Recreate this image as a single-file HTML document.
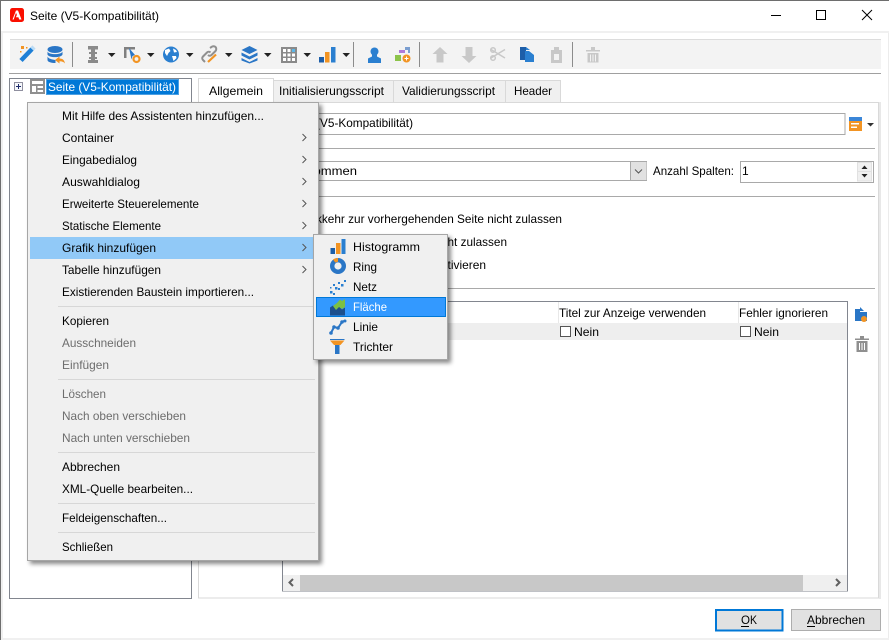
<!DOCTYPE html>
<html lang="de"><head><meta charset="utf-8"><title>Seite (V5-Kompatibilität)</title>
<style>html,body{margin:0;padding:0;background:#fff;overflow:hidden}svg{display:block}
text{font-family:"Liberation Sans",sans-serif;font-size:12px;fill:#000}
.d{fill:#6d6d6d}.w{fill:#fff}</style></head><body>
<svg width="889" height="640" viewBox="0 0 889 640" xmlns="http://www.w3.org/2000/svg">
<defs><filter id="s" x="-5%" y="-5%" width="115%" height="115%"><feDropShadow dx="3" dy="3" stdDeviation="2" flood-color="#000" flood-opacity=".45"/></filter></defs>
<rect width="889" height="640" fill="#fff"/>
<!-- window frame -->
<rect x="0" y="0" width="889" height="1" fill="#6e6e6e"/>
<rect x="0" y="0" width="1" height="640" fill="#6e6e6e"/>
<rect x="1" y="31" width="888" height="2" fill="#f0f0f0"/>
<rect x="1" y="33" width="2" height="605" fill="#f0f0f0"/>
<rect x="888" y="33" width="1" height="605" fill="#ececec"/>
<rect x="1" y="638" width="888" height="2" fill="#f0f0f0"/>
<!-- title bar -->
<rect x="10" y="8" width="14" height="14" rx="2.500" fill="#fa0f00"/>
<path d="M12.500 19.500 16 10.500h2l3.500 9h-2.300l-.8-2.200h-2.500l1-2.400-.9-2.200-2.300 6.800z" fill="#fff"/>
<text x="30" y="20" textLength="129" lengthAdjust="spacingAndGlyphs">Seite (V5-Kompatibilität)</text>
<rect x="771" y="15" width="10" height="1" fill="#000"/>
<rect x="816.500" y="10.500" width="9" height="9" fill="none" stroke="#000"/>
<path d="M862 10l10 10M872 10l-10 10" stroke="#000" fill="none"/>
<!-- toolbar -->
<rect x="10" y="39" width="871" height="30" fill="#f3f3f3"/>
<rect x="10" y="39" width="871" height="1" fill="#dcdcdc"/>
<rect x="9" y="73" width="872" height="1" fill="#a0a0a0"/>
<g fill="#8c8c8c"><rect x="72" y="42" width="1" height="25"/><rect x="353" y="42" width="1" height="25"/><rect x="419" y="42" width="1" height="25"/><rect x="572" y="42" width="1" height="25"/></g>
<!-- wand -->
<path d="M21 60.500 32 49" stroke="#1e7fd6" stroke-width="4.500" fill="none"/><path d="M32 49l2-2" stroke="#bcdcf5" stroke-width="4.500"/>
<g fill="#f29423"><rect x="21" y="46" width="3" height="3"/><rect x="26" y="47" width="1.500" height="1.500"/><rect x="20" y="51" width="1.500" height="1.500"/></g>
<!-- db -->
<ellipse cx="55" cy="49.500" rx="7.500" ry="3.500" fill="#2a76c6"/><path d="M47.500 51.500c1 3.500 14 3.500 15 0v3c-1 3.500-14 3.500-15 0zM47.500 56.500c1 3 8 3.500 8 3.500v3c-4 0-8-1-8-3z" fill="#2a76c6"/>
<path d="M55 60l4.500-3.500v2c3.500 0 5 2 5.500 5-1-1.500-3-2.300-5.500-2.300v2.300z" fill="#f29423"/>
<!-- I beam -->
<path d="M88 46h10v3.500h-3V52h2v2h-2v3h2v2h-2v1h3v3H88v-3h3v-1h-2v-2h2v-3h-2v-2h2v-2.500h-3z" fill="#8a8a8a"/>
<!-- arrows -->
<g fill="#222"><path d="M108 53h7.500l-3.750 4zM147 53h7.500l-3.750 4zM186 53h7.500l-3.750 4zM225 53h7.500l-3.750 4zM264 53h7.500l-3.750 4zM303.500 53h7.500l-3.750 4zM342.500 53h7.500l-3.750 4z"/></g>
<!-- field-settings -->
<path d="M124 47h11v2.500h-8.500V58H124z" fill="#808080"/><path d="M129 48l6 7-2.500 1-1 3.500z" fill="#2a76c6"/><circle cx="136.500" cy="59" r="3" fill="none" stroke="#f29423" stroke-width="2.200"/>
<!-- globe -->
<circle cx="171" cy="54.500" r="8" fill="#2a7fd0"/><path d="M165 50l4-1.500 1.500 2.500-2 2-1.500 3-2-3zM173 48.500l3 1.500 1 2-3 .5zM172 56l4 0 .5 2-3 3z" fill="#fff"/>
<!-- link -->
<path d="M205 62l-2-2c-1-1-1-2.500 0-3.500l4-4c1-1 2.500-1 3.500 0M210 48l1.500-1c1-1 3-1 4 0s1 3 0 4l-4 4c-1 1-2.500 1-3.500 0" stroke="#909090" stroke-width="2" fill="none"/><path d="M208 62l8-7.500" stroke="#f29423" stroke-width="2.200"/>
<!-- layers -->
<path d="M249.500 46l8 4-8 4-8-4z" fill="#2a76c6"/><path d="M241.500 52.500l8 4 8-4v3l-8 4-8-4z" fill="#2a76c6"/><path d="M241.500 58l8 4 8-4v2.500l-8 3-8-3z" fill="#2a76c6"/>
<!-- table -->
<rect x="281" y="47" width="16" height="16" fill="#8a8a8a"/><g fill="#fff"><rect x="283" y="49" width="3" height="3"/><rect x="287.500" y="49" width="3" height="3"/><rect x="283" y="53.500" width="3" height="3"/><rect x="287.500" y="53.500" width="3" height="3"/><rect x="292" y="53.500" width="3" height="3"/><rect x="283" y="58" width="3" height="3"/><rect x="287.500" y="58" width="3" height="3"/><rect x="292" y="58" width="3" height="3"/></g><rect x="292" y="49" width="3" height="3" fill="#5bb7e8"/>
<!-- chart -->
<rect x="319" y="57" width="5" height="5.500" fill="#1d5ea8"/><rect x="325" y="52" width="4.500" height="10.500" fill="#f29423"/><rect x="331" y="47" width="4.500" height="15.500" fill="#2a7fd0"/>
<!-- person -->
<circle cx="374.500" cy="51.500" r="4" fill="#2a7fd0"/><path d="M372 54.500h5v2l4 2v4.500h-13v-4.500l4-2z" fill="#2a7fd0"/>
<!-- add shape -->
<rect x="395" y="55" width="6" height="6" fill="#8cc34a"/><path d="M399 50h6v3h-6z" fill="#b07ad8"/><path d="M405 47h5v6h-2v-3h-3z" fill="#7b9ed0"/><circle cx="406.500" cy="58.500" r="4" fill="#f29423"/><path d="M404.500 58.500h4M406.500 56.500v4" stroke="#fff"/>
<!-- disabled -->
<path d="M440 47l7.500 7h-4v8.500h-7V54h-4z" fill="#c8c8c8"/>
<path d="M469 63l-7.500-7h4v-9h7v9h4z" fill="#c8c8c8"/>
<path d="M491 49.500l14 8.500M491 58l14-8.500" stroke="#c8c8c8" stroke-width="1.500"/><circle cx="493" cy="50" r="2.300" fill="none" stroke="#c8c8c8" stroke-width="1.500"/><circle cx="493" cy="58" r="2.300" fill="none" stroke="#c8c8c8" stroke-width="1.500"/>
<path d="M520 47h6v13h-6z" fill="#1d5ea8"/><path d="M525 51h4l5 4v7h-9z" fill="#2a7fd0"/><path d="M526 47l4 3h-4z" fill="#2a7fd0"/>
<path d="M551 50h3v-3h5v3h3v13h-11z" fill="#c8c8c8"/><rect x="554" y="54" width="5" height="6" fill="#f3f3f3"/>
<path d="M586 50h14v1.500h-14zM591 47h4v3h-4zM587.500 53h11v9.500h-11z" fill="#c8c8c8"/><path d="M590.500 54.500v7M593 54.500v7M595.500 54.500v7" stroke="#f3f3f3"/>
<!-- tree -->
<rect x="9.500" y="78.500" width="182" height="520" fill="#fff" stroke="#82868f"/>
<rect x="14.500" y="82.500" width="8" height="8" fill="#f6f8fb" stroke="#8f8f9f"/><path d="M16 86.500h5M18.500 84v5" stroke="#1e2a6a"/>
<rect x="30" y="79" width="15" height="15" fill="#8f8f8f"/><rect x="32" y="81" width="11" height="3" fill="#fff"/><rect x="32" y="86" width="4" height="6" fill="#fff"/><rect x="37.500" y="86" width="5.500" height="2" fill="#fff"/><rect x="37.500" y="90" width="5.500" height="2" fill="#fff"/>
<rect x="46" y="79" width="133" height="16" fill="#0078d7"/>
<rect x="46.500" y="79.500" width="132" height="15" fill="none" stroke="#fff" stroke-dasharray="1 1" opacity=".6"/>
<text class="w" x="48" y="91" textLength="128" lengthAdjust="spacingAndGlyphs">Seite (V5-Kompatibilität)</text>
<!-- tabs -->
<rect x="198.500" y="102.500" width="680" height="495.500" fill="#fff" stroke="#d9d9d9"/>
<rect x="879" y="102" width="2" height="497" fill="#e8e8e8"/>
<rect x="274" y="80.500" width="287" height="21.500" fill="#f0f0f0"/>
<path d="M274 80.500h286.500V102M393.500 81v21M505.500 81v21" stroke="#d9d9d9" fill="none"/>
<rect x="198.500" y="78.500" width="75" height="24" fill="#fff"/><path d="M198.500 103V78.500h75V103" stroke="#d9d9d9" fill="none"/>
<text x="209" y="95" textLength="54" lengthAdjust="spacingAndGlyphs">Allgemein</text>
<text x="279" y="95" textLength="105" lengthAdjust="spacingAndGlyphs">Initialisierungsscript</text>
<text x="402" y="95" textLength="93" lengthAdjust="spacingAndGlyphs">Validierungsscript</text>
<text x="514" y="95" textLength="38" lengthAdjust="spacingAndGlyphs">Header</text>
<!-- form -->
<rect x="282.500" y="113.500" width="562.500" height="21" fill="#fff" stroke="#a9a9a9"/>
<text x="286" y="127" textLength="127" lengthAdjust="spacingAndGlyphs">Seite (V5-Kompatibilität)</text>
<rect x="849" y="117" width="13" height="4" fill="#3b86d8"/><rect x="849" y="121" width="13" height="10" fill="#f29423"/><rect x="851" y="123" width="8" height="1.500" fill="#fff"/><rect x="851" y="126.500" width="6" height="1.500" fill="#fff"/>
<path d="M867 123h7l-3.500 3.500z" fill="#333"/>
<rect x="210" y="148" width="665" height="1" fill="#a9a9a9"/>
<rect x="282.500" y="161.500" width="364" height="19" fill="#fff" stroke="#a9a9a9"/>
<rect x="631" y="162" width="15.500" height="18" fill="#e1e1e1"/><rect x="630" y="162" width="1" height="18" fill="#a9a9a9"/>
<path d="M635 169.500l3.500 3.500 3.500-3.500" stroke="#555" fill="none"/>
<text x="286" y="175" textLength="71" lengthAdjust="spacingAndGlyphs">Willkommen</text>
<text x="653" y="175" textLength="81" lengthAdjust="spacingAndGlyphs">Anzahl Spalten:</text>
<rect x="740.500" y="161.500" width="133" height="21" fill="#fff" stroke="#a9a9a9"/>
<text x="742" y="175">1</text>
<rect x="857" y="162" width="15" height="19.500" fill="#e1e1e1"/><rect x="858" y="163" width="13" height="8" fill="#f0f0f0"/><rect x="858" y="172" width="13" height="8.500" fill="#f0f0f0"/>
<path d="M861.500 169h6l-3-3.500zM861.500 174h6l-3 3.500z" fill="#222"/>
<rect x="210" y="196" width="665" height="1" fill="#a9a9a9"/>
<text x="300" y="223" textLength="16" lengthAdjust="spacingAndGlyphs">Rüc</text>
<text x="316" y="223" textLength="246" lengthAdjust="spacingAndGlyphs">kkehr zur vorhergehenden Seite nicht zulassen</text>
<text x="300" y="246" textLength="147" lengthAdjust="spacingAndGlyphs">Automatische Weiterleitung nic</text>
<text x="447.500" y="246" textLength="59.500" lengthAdjust="spacingAndGlyphs">ht zulassen</text>
<text x="340" y="269" textLength="107" lengthAdjust="spacingAndGlyphs">Seitenansicht ak</text>
<text x="447.500" y="269" textLength="38.500" lengthAdjust="spacingAndGlyphs">tivieren</text>
<rect x="210" y="288" width="665" height="1" fill="#a9a9a9"/>
<!-- table -->
<rect x="282.500" y="301.500" width="565" height="289.500" fill="#fff" stroke="#82868f"/>
<rect x="283" y="323" width="564" height="17" fill="#eeeeee"/>
<rect x="558" y="302" width="1" height="21" fill="#e8e8e8"/><rect x="738" y="302" width="1" height="21" fill="#e8e8e8"/>
<text x="559" y="317" textLength="147" lengthAdjust="spacingAndGlyphs">Titel zur Anzeige verwenden</text>
<text x="739" y="317" textLength="89" lengthAdjust="spacingAndGlyphs">Fehler ignorieren</text>
<rect x="560.500" y="326.500" width="10" height="10" fill="#fff" stroke="#555"/><text x="574" y="336" textLength="25" lengthAdjust="spacingAndGlyphs">Nein</text>
<rect x="740.500" y="326.500" width="10" height="10" fill="#fff" stroke="#555"/><text x="754" y="336" textLength="25" lengthAdjust="spacingAndGlyphs">Nein</text>
<rect x="283" y="575" width="564" height="16" fill="#efefef"/><rect x="300" y="575" width="503" height="16" fill="#c8c8c8"/>
<path d="M293 579l-3.500 3.500 3.500 3.500M836 579l3.500 3.500-3.500 3.500" stroke="#606060" stroke-width="2" fill="none"/>
<!-- side icons -->
<path d="M855 309h5v3h7v9h-12z" fill="#2a76c6"/><path d="M860 307l4 4h-4z" fill="#2a76c6"/><circle cx="864" cy="319" r="3" fill="#f29423"/>
<path d="M855 338.500h14v1.500h-14zM860 336h4v2.500h-4zM856.500 341h11v11h-11z" fill="#8f8f8f"/><path d="M859.500 343v7M862 343v7M864.500 343v7" stroke="#fff"/>
<!-- buttons -->
<rect x="716" y="610" width="66.500" height="20.500" fill="#e1e1e1" stroke="#0078d7" stroke-width="2"/>
<text x="741" y="624" textLength="9" lengthAdjust="spacingAndGlyphs">O</text><text x="750" y="624" textLength="7" lengthAdjust="spacingAndGlyphs">K</text><rect x="741" y="626" width="8" height="1" fill="#000"/>
<rect x="791.500" y="609.500" width="89" height="21" fill="#e1e1e1" stroke="#adadad"/>
<text x="807" y="624" textLength="58" lengthAdjust="spacingAndGlyphs">Abbrechen</text><rect x="807" y="626" width="8" height="1" fill="#000"/>
<!-- context menu -->
<rect x="27.500" y="102.500" width="291" height="458" fill="#f0f0f0" stroke="#a6a6a6" filter="url(#s)"/>
<rect x="30" y="237" width="287" height="22" fill="#91c9f7"/>
<g fill="#d7d7d7"><rect x="58" y="306" width="257" height="1"/><rect x="58" y="379" width="257" height="1"/><rect x="58" y="452" width="257" height="1"/><rect x="58" y="503" width="257" height="1"/><rect x="58" y="532" width="257" height="1"/></g>
<text x="62" y="120" textLength="202" lengthAdjust="spacingAndGlyphs">Mit Hilfe des Assistenten hinzufügen...</text>
<text x="62" y="142" textLength="52" lengthAdjust="spacingAndGlyphs">Container</text>
<text x="62" y="164" textLength="75" lengthAdjust="spacingAndGlyphs">Eingabedialog</text>
<text x="62" y="186" textLength="78" lengthAdjust="spacingAndGlyphs">Auswahldialog</text>
<text x="62" y="208" textLength="137" lengthAdjust="spacingAndGlyphs">Erweiterte Steuerelemente</text>
<text x="62" y="230" textLength="99" lengthAdjust="spacingAndGlyphs">Statische Elemente</text>
<text x="62" y="252" textLength="94" lengthAdjust="spacingAndGlyphs">Grafik hinzufügen</text>
<text x="62" y="274" textLength="99" lengthAdjust="spacingAndGlyphs">Tabelle hinzufügen</text>
<text x="62" y="296" textLength="192" lengthAdjust="spacingAndGlyphs">Existierenden Baustein importieren...</text>
<text x="62" y="325" textLength="47" lengthAdjust="spacingAndGlyphs">Kopieren</text>
<text class="d" x="62" y="347" textLength="74" lengthAdjust="spacingAndGlyphs">Ausschneiden</text>
<text class="d" x="62" y="369" textLength="47" lengthAdjust="spacingAndGlyphs">Einfügen</text>
<text class="d" x="62" y="398" textLength="44" lengthAdjust="spacingAndGlyphs">Löschen</text>
<text class="d" x="62" y="420" textLength="124" lengthAdjust="spacingAndGlyphs">Nach oben verschieben</text>
<text class="d" x="62" y="442" textLength="128" lengthAdjust="spacingAndGlyphs">Nach unten verschieben</text>
<text x="62" y="471" textLength="58" lengthAdjust="spacingAndGlyphs">Abbrechen</text>
<text x="62" y="493" textLength="131" lengthAdjust="spacingAndGlyphs">XML-Quelle bearbeiten...</text>
<text x="62" y="522" textLength="105" lengthAdjust="spacingAndGlyphs">Feldeigenschaften...</text>
<text x="62" y="551" textLength="51" lengthAdjust="spacingAndGlyphs">Schließen</text>
<g stroke="#555" fill="none"><path d="M302.500 134l3.500 3.500-3.500 3.500M302.500 156l3.500 3.500-3.500 3.500M302.500 178l3.500 3.500-3.500 3.500M302.500 200l3.500 3.500-3.500 3.500M302.500 222l3.500 3.500-3.500 3.500M302.500 244l3.500 3.500-3.500 3.500M302.500 266l3.500 3.500-3.500 3.500"/></g>
<!-- submenu -->
<rect x="313.500" y="234.500" width="134" height="125" fill="#f0f0f0" stroke="#a6a6a6" filter="url(#s)"/>
<rect x="316.500" y="297.500" width="129" height="19" fill="#3399ff" stroke="#0078d7"/>
<text x="353" y="251" textLength="67" lengthAdjust="spacingAndGlyphs">Histogramm</text>
<text x="353" y="271" textLength="24" lengthAdjust="spacingAndGlyphs">Ring</text>
<text x="353" y="291" textLength="24" lengthAdjust="spacingAndGlyphs">Netz</text>
<text class="w" x="353" y="311" textLength="34" lengthAdjust="spacingAndGlyphs">Fläche</text>
<text x="353" y="331" textLength="25" lengthAdjust="spacingAndGlyphs">Linie</text>
<text x="353" y="351" textLength="40" lengthAdjust="spacingAndGlyphs">Trichter</text>
<rect x="330.500" y="248" width="4.500" height="6" fill="#1d5ea8"/><rect x="336" y="243" width="4.500" height="11" fill="#f29423"/><rect x="341.500" y="239" width="4" height="15" fill="#2a7fd0"/>
<circle cx="338" cy="266" r="5.800" fill="none" stroke="#2a76c6" stroke-width="4.400"/><path d="M333 259.500a8 8 0 0 1 5-1.500v3.800a4.200 4.200 0 0 0-2.500 1z" fill="#f29423"/>
<g fill="#2a7fd0"><rect x="330" y="291" width="2.500" height="2.500"/><rect x="333" y="293" width="2" height="2"/><rect x="335" y="287" width="2.500" height="2.500"/><rect x="338" y="288" width="2" height="2"/><rect x="333" y="284" width="2" height="2"/><rect x="341" y="284" width="2.500" height="2.500"/><rect x="344" y="280" width="2" height="2"/><rect x="338" y="282" width="2" height="2"/><rect x="330" y="287" width="1.500" height="1.500"/></g>
<path d="M330 315.500v-8l3-2 3 4 3-3 3 3 3-2v8z" fill="#1d4f8c"/><path d="M333 306l4-3 3-3.500 2 1.500 3-2v8l-3 2-3-2-3 3z" fill="#7cc043"/>
<path d="M331 333l3-6 4 1 4-6 3-1.500" stroke="#2a76c6" stroke-width="2" fill="none"/><g fill="#2a76c6"><circle cx="331" cy="333" r="1.800"/><circle cx="334" cy="327" r="1.800"/><circle cx="338" cy="328" r="1.800"/><circle cx="342" cy="322" r="1.800"/><circle cx="345" cy="321" r="1.500"/></g>
<rect x="330" y="339" width="14.500" height="1" fill="#2a76c6"/><path d="M330 340.500h14.500l-4 4.500h-6.500z" fill="#f29423"/><path d="M335 345h4.500v9H335z" fill="#2a76c6"/>
</svg></body></html>
